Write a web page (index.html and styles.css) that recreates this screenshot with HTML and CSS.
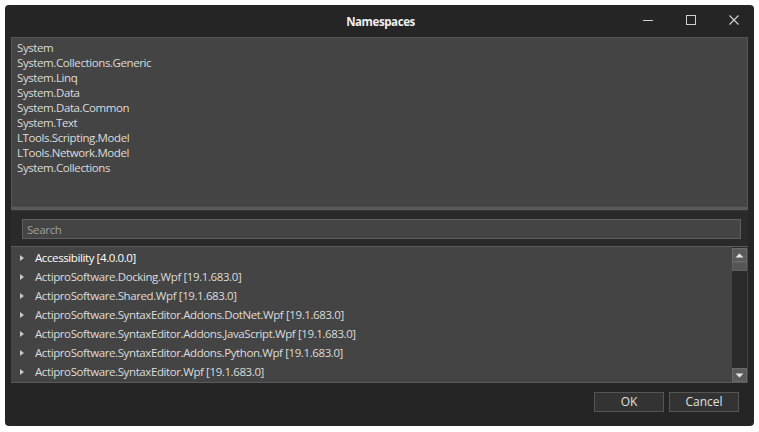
FILE: index.html
```html
<!DOCTYPE html>
<html>
<head>
<meta charset="utf-8">
<link rel="stylesheet" href="styles.css">
</head>
<body>
<div class="window">
  <div class="titlebar">
    <div class="title">Namespaces</div>
    <div class="controls">
      <span class="ctl"><svg width="12" height="12" viewBox="0 0 12 12"><path d="M1 6.5h10" stroke="#cfcfcf" stroke-width="1"/></svg></span>
      <span class="ctl"><svg width="12" height="12" viewBox="0 0 12 12"><rect x="1.5" y="1.5" width="9" height="9" fill="none" stroke="#cfcfcf" stroke-width="1"/></svg></span>
      <span class="ctl"><svg width="12" height="12" viewBox="0 0 12 12"><path d="M1.5 1.5l9 9M10.5 1.5l-9 9" stroke="#cfcfcf" stroke-width="1.2"/></svg></span>
    </div>
  </div>
  <div class="content">
    <div class="usings">
      <div>System</div>
      <div>System.Collections.Generic</div>
      <div>System.Linq</div>
      <div>System.Data</div>
      <div>System.Data.Common</div>
      <div>System.Text</div>
      <div>LTools.Scripting.Model</div>
      <div>LTools.Network.Model</div>
      <div>System.Collections</div>
    </div>
    <div class="splitter"></div>
    <div class="searchbar">
      <div class="search">Search</div>
    </div>
    <div class="tree">
      <div class="rows">
        <div class="row first"><span class="arrow"></span>Accessibility [4.0.0.0]</div>
        <div class="row"><span class="arrow"></span>ActiproSoftware.Docking.Wpf [19.1.683.0]</div>
        <div class="row"><span class="arrow"></span>ActiproSoftware.Shared.Wpf [19.1.683.0]</div>
        <div class="row"><span class="arrow"></span>ActiproSoftware.SyntaxEditor.Addons.DotNet.Wpf [19.1.683.0]</div>
        <div class="row"><span class="arrow"></span>ActiproSoftware.SyntaxEditor.Addons.JavaScript.Wpf [19.1.683.0]</div>
        <div class="row"><span class="arrow"></span>ActiproSoftware.SyntaxEditor.Addons.Python.Wpf [19.1.683.0]</div>
        <div class="row"><span class="arrow"></span>ActiproSoftware.SyntaxEditor.Wpf [19.1.683.0]</div>
      </div>
      <div class="scrollbar">
        <div class="sbtn"><svg width="9" height="5" viewBox="0 0 9 5"><path d="M0.5 4.5L4.5 0.5L8.5 4.5Z" fill="#e8e8e8"/></svg></div>
        <div class="thumb"></div>
        <div class="track"></div>
        <div class="sbtn"><svg width="9" height="5" viewBox="0 0 9 5"><path d="M0.5 0.5L4.5 4.5L8.5 0.5Z" fill="#e8e8e8"/></svg></div>
      </div>
    </div>
    <div class="footer">
      <div class="btn">OK</div>
      <div class="btn">Cancel</div>
    </div>
  </div>
</div>
</body>
</html>
```
FILE: styles.css
```css
html, body {
  margin: 0;
  padding: 0;
  background: #ffffff;
}
body {
  font-family: "Open Sans", "Noto Sans", sans-serif;
  font-size: 11.5px;
  color: #dcdcdc;
}
.window {
  margin: 5px 0 0 5px;
  width: 749px;
  height: 421px;
  background: #252525;
  border-radius: 4px;
  display: flex;
  flex-direction: column;
  box-sizing: border-box;
}
.titlebar {
  height: 32px;
  position: relative;
  display: flex;
  align-items: center;
  justify-content: center;
}
.title {
  font-weight: bold;
  color: #f0f0f0;
  font-size: 11.5px;
  letter-spacing: -0.4px;
  padding-left: 2px;
}
.controls {
  position: absolute;
  right: 14px;
  top: 9px;
  display: flex;
  gap: 31px;
}
.ctl {
  width: 12px;
  height: 12px;
  display: block;
}
.ctl svg { display: block; }
.content {
  padding: 0 6px;
  display: flex;
  flex-direction: column;
}
.usings {
  height: 169px;
  background: #444444;
  border: 1px solid #555555;
  border-bottom: none;
  padding: 2px 0 0 5px;
  box-sizing: border-box;
  line-height: 15px;
  letter-spacing: -0.4px;
}
.splitter {
  height: 3px;
  background: #5a5a5a;
  border-top: 1px solid #4a4a4a;
  border-bottom: 1px solid #333;
}
.searchbar {
  height: 35px;
  background: #2a2a2a;
  padding: 8px 7px 0 11px;
  box-sizing: border-box;
}
.search {
  height: 20px;
  background: #444444;
  border: 1px solid #5f5f5f;
  box-sizing: border-box;
  color: #a0a0a0;
  line-height: 19px;
  padding-left: 4px;
  letter-spacing: -0.3px;
}
.tree {
  height: 137px;
  background: #444444;
  border-top: 1px solid #5a5a5a;
  border-bottom: 1px solid #5a5a5a;
  box-sizing: border-box;
  display: flex;
  padding-right: 1px;
}
.rows {
  flex: 1;
  padding-top: 1px;
}
.row {
  height: 19px;
  line-height: 19px;
  display: flex;
  align-items: center;
  letter-spacing: -0.4px;
  color: #dcdcdc;
}
.row.first {
  color: #ffffff;
}
.arrow {
  width: 0;
  height: 0;
  border-left: 4px solid #c8c8c8;
  border-top: 3.5px solid transparent;
  border-bottom: 3.5px solid transparent;
  margin: 0 11px 0 9px;
}
.scrollbar {
  width: 15px;
  display: flex;
  flex-direction: column;
  padding-top: 1px;
  background: #2a2a2a;
}
.sbtn {
  height: 14px;
  background: #5a5a5a;
  border: 1px solid #6a6a6a;
  box-sizing: border-box;
  display: flex;
  align-items: center;
  justify-content: center;
}
.thumb {
  height: 9px;
  background: #555555;
  border: 1px solid #606060;
  box-sizing: border-box;
}
.track {
  flex: 1;
}
.footer {
  display: flex;
  justify-content: flex-end;
  gap: 5px;
  padding: 9px 9px 0 0;
}
.btn {
  width: 70px;
  height: 20px;
  box-sizing: border-box;
  background: #333333;
  border: 1px solid #555555;
  color: #e0e0e0;
  text-align: center;
  line-height: 18px;
  font-size: 12px;
}
```
